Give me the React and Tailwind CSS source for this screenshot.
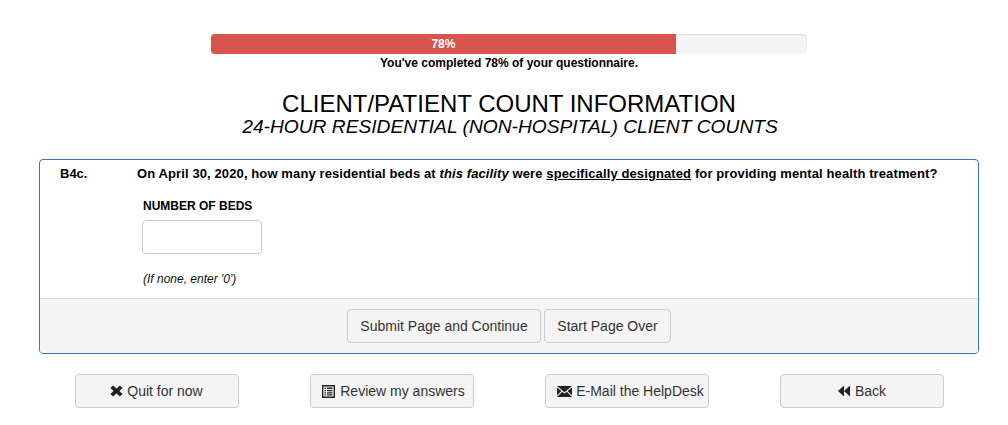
const FONT = "font-['Liberation_Sans',Arial,sans-serif]"

function QuitIcon() {
  return (
    <svg width="13" height="12" viewBox="0 0 13 12" className="shrink-0">
      <path d="M0.4 3 L3 0.4 L6.5 3.4 L10 0.4 L12.6 3 L9.4 6 L12.6 9 L10 11.6 L6.5 8.6 L3 11.6 L0.4 9 L3.6 6 Z" fill="#222" />
    </svg>
  )
}

function ReviewIcon() {
  return (
    <svg width="13" height="13" viewBox="0 0 13 13" className="shrink-0">
      <path fillRule="evenodd" d="M0 0H13V13H0Z M1.4 1.4V11.6H11.6V1.4Z" fill="#222" />
      <path d="M2.6 2.6H4V4H2.6Z M5 2.6H10.4V4H5Z M2.6 4.9H4V6.3H2.6Z M5 4.9H10.4V6.3H5Z M2.6 7.2H4V8.6H2.6Z M5 7.2H10.4V8.6H5Z M2.6 9.3H4V10.5H2.6Z M5 9.3H10.4V10.5H5Z" fill="#222" />
    </svg>
  )
}

function MailIcon() {
  return (
    <svg width="15" height="11" viewBox="0 0 15 11" className="shrink-0">
      <path d="M0 0H15L7.5 6.2Z" fill="#222" />
      <path d="M0 1.4L4.4 5L0 9.4Z M15 1.4L10.6 5L15 9.4Z" fill="#222" />
      <path d="M0 11L5.2 5.7L7.5 7.6L9.8 5.7L15 11Z" fill="#222" />
    </svg>
  )
}

function BackIcon() {
  return (
    <svg width="12" height="12" viewBox="0 0 12 12" className="shrink-0">
      <path d="M6 0.5V11.5L0 6Z M12 0.5V11.5L6 6Z" fill="#222" />
    </svg>
  )
}

function Btn({ children, className = '' }) {
  return (
    <button className={`h-[34px] flex items-center justify-center rounded border border-[#ccc] bg-[#f4f4f4] text-sm text-[#333] ${className}`}>
      {children}
    </button>
  )
}

export default function App() {
  return (
    <div className={`${FONT} w-[1008px] h-[425px] bg-white text-black overflow-hidden pt-[34px]`}>
      <div className="w-[596px] ml-[211px]">
        <div className="h-5 flex rounded bg-[#f5f5f5] overflow-hidden shadow-[inset_0_1px_2px_rgba(0,0,0,0.1)]">
          <div className="w-[78%] bg-[#d9534f] text-white text-xs font-bold text-center leading-5">78%</div>
        </div>
        <p className="text-xs font-bold text-center leading-[14px] mt-0.5">You've completed 78% of your questionnaire.</p>
      </div>

      <div className="ml-[39px] w-[940px] mt-[21px] text-center">
        <h1 className="text-2xl leading-[26px]">CLIENT/PATIENT COUNT INFORMATION</h1>
        <h2 className="text-[19.2px] italic leading-[20px] pl-[2px]">24-HOUR RESIDENTIAL (NON-HOSPITAL) CLIENT COUNTS</h2>
      </div>

      <div className="ml-[39px] mt-[22px] w-[940px] h-[195px] flex flex-col rounded border border-[#337ab7] overflow-hidden">
        <div className="flex-1 relative">
          <div className="flex text-[13px] font-bold leading-[14px] pt-[7px] pl-5">
            <span className="w-[77px] shrink-0">B4c.</span>
            <span className="tracking-[0.11px]">
              On April 30, 2020, how many residential beds at <em>this facility</em> were <u>specifically designated</u> for providing mental health treatment?
            </span>
          </div>
          <div className="ml-[102px]">
            <label className="block text-xs font-bold leading-[14px] mt-[18px] pl-px">NUMBER OF BEDS</label>
            <input className="block w-[120px] h-[34px] mt-[7px] rounded border border-[#ccc] bg-white" />
            <p className="text-xs italic leading-[14px] mt-[18px] pl-px text-[#111]">(If none, enter '0')</p>
          </div>
        </div>
        <div className="h-[55px] bg-[#f5f5f5] border-t border-[#ddd] flex items-center justify-center gap-[3px]">
          <Btn className="w-[194px]">Submit Page and Continue</Btn>
          <Btn className="w-[127px]">Start Page Over</Btn>
        </div>
      </div>

      <div className="ml-[39px] mt-5 w-[940px] grid grid-cols-4 justify-items-center">
        <Btn className="w-[164px] gap-[4px]"><QuitIcon />Quit for now</Btn>
        <Btn className="w-[164px] gap-[5px] pl-[4px]"><ReviewIcon />Review my answers</Btn>
        <Btn className="w-[164px] gap-[4px] pl-[8px]"><MailIcon />E-Mail the HelpDesk</Btn>
        <Btn className="w-[164px] gap-[5px] pl-px"><BackIcon />Back</Btn>
      </div>
    </div>
  )
}
